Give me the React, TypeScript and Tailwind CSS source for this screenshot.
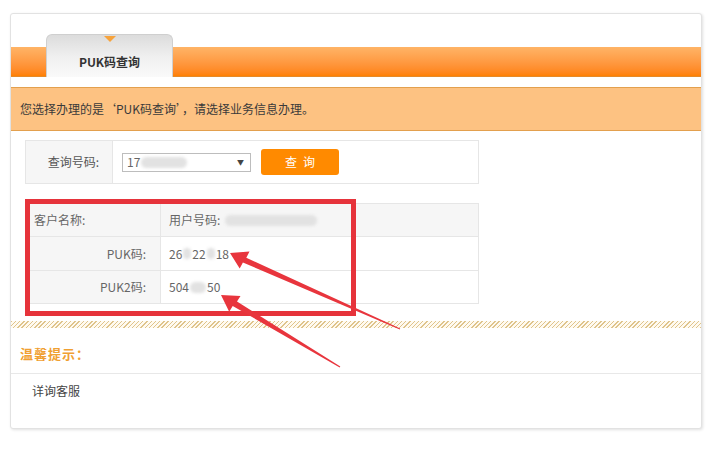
const font = { fontFamily: '"Noto Sans CJK SC", "Liberation Sans", sans-serif' }

function Blob({ w }: { w: number }) {
  // 打码的数字
  return <span className="inline-block h-[11px] rounded-full bg-[#e2e2e2] blur-[1.5px] align-middle mx-[1px]" style={{ width: w }} />
}

export default function App() {
  return (
    <div className="relative w-[720px] h-[462px] bg-white pt-[13px] pl-[10px] text-[#333]" style={font}>
      <div className="relative w-[692px] h-[416px] border border-[#e2e2e2] rounded-[3px] shadow-[1px_1px_3px_rgba(0,0,0,0.12)] bg-white">

        {/* ── Onglets ─────────────────────────────────────────── */}
        <div className="flex pt-[20px]">
          <div className="w-[35px] h-[30px] self-end bg-gradient-to-b from-[#ffb466] to-[#ff8000] border-b border-[#e58a2a]" />
          <div className="relative w-[127px] h-[43px] rounded-t-[6px] border border-b-0 border-[#cfcfcf] bg-gradient-to-b from-[#dcdcdc] via-[#efefef] to-[#fafafa] flex items-center justify-center pt-[12px]">
            <span className="absolute top-[1px] left-1/2 -translate-x-1/2 w-0 h-0 border-l-[6px] border-r-[6px] border-t-[6px] border-l-transparent border-r-transparent border-t-[#f7a33c]" />
            <span className="text-[12px] font-bold text-[#333]">PUK码查询</span>
          </div>
          <div className="flex-1 h-[30px] self-end bg-gradient-to-b from-[#ffb466] to-[#ff8000] border-b border-[#e58a2a]" />
        </div>

        {/* ── Bandeau ─────────────────────────────────────────── */}
        <div className="mt-[10px] h-[44px] bg-[#fdc282] border-y border-[#e3a04e] flex items-center pl-[9px] text-[12px] text-[#3a3a3a]">
          您选择办理的是‘PUK码查询’，请选择业务信息办理。
        </div>

        {/* ── Recherche ───────────────────────────────────────── */}
        <div className="ml-[14px] mt-[9px] w-[454px] h-[44px] border border-[#e6e6e6] flex">
          <div className="w-[87px] bg-[#f6f6f6] border-r border-[#e6e6e6] flex items-center justify-end pr-[13px] text-[12px] text-[#555]">查询号码:</div>
          <div className="flex items-center pl-[9px]">
            <div className="w-[129px] h-[19px] border border-[#bdbdbd] bg-white flex items-center pl-[4px] pr-[6px] text-[12px] text-[#666]">
              <span>17</span>
              <Blob w={46} />
              <span className="ml-auto text-[7px] text-[#444]">▼</span>
            </div>
            <button className="ml-[10px] w-[78px] h-[26px] rounded-[3px] bg-[#ff8a00] text-white text-[12px] tracking-[6px] pl-[6px]">查询</button>
          </div>
        </div>

        {/* ── Résultat ────────────────────────────────────────── */}
        <div className="ml-[14px] mt-[19px] w-[454px] border border-[#e6e6e6] text-[12px] text-[#666]">
          <div className="flex h-[33px] bg-[#f6f6f6] border-b border-[#e6e6e6]">
            <div className="w-[135px] border-r border-[#e6e6e6] flex items-center pl-[8px]">客户名称:</div>
            <div className="flex items-center pl-[8px]">用户号码:<span className="w-[4px]" /><Blob w={92} /></div>
          </div>
          <div className="flex h-[34px] border-b border-[#e6e6e6]">
            <div className="w-[135px] bg-[#f6f6f6] border-r border-[#e6e6e6] flex items-center justify-end pr-[14px]">PUK码:</div>
            <div className="flex items-center pl-[8px]">26<Blob w={8} />22<Blob w={8} />18</div>
          </div>
          <div className="flex h-[32px]">
            <div className="w-[135px] bg-[#f6f6f6] border-r border-[#e6e6e6] flex items-center justify-end pr-[14px]">PUK2码:</div>
            <div className="flex items-center pl-[8px]">504<Blob w={16} />50</div>
          </div>
        </div>

        {/* ── Séparateur hachuré ─────────────────────────────── */}
        <div className="mt-[17px] h-[7px] bg-[repeating-linear-gradient(135deg,#dfc48c_0px,#dfc48c_1px,#fffaf0_1px,#fffaf0_3px)]" />

        {/* ── Tips ────────────────────────────────────────────── */}
        <div className="h-[46px] border-b border-[#e8e8e8] flex items-center pl-[9px] pt-[6px] text-[13px] font-bold text-[#f0a032] tracking-[1px]">温馨提示：</div>
        <div className="pl-[21px] pt-[8px] text-[12px] text-[#444]">详询客服</div>

        {/* cadre rouge annoté */}
        <div className="absolute left-[14px] top-[185px] w-[331px] h-[117px] border-[5px] border-[#e6333b] pointer-events-none" />
      </div>

      {/* flèches annotées */}
      <svg className="absolute left-0 top-0 pointer-events-none" width="720" height="462" viewBox="0 0 720 462">
        <polygon fill="#e8353d" points="230,253 249.5,251.5 246.3,257.8 400.2,328.5 399.8,329.5 242.9,262.4 239.7,268.5" />
        <polygon fill="#e8353d" points="221,295 240.5,296 237,301.6 340.3,366.6 339.7,367.4 232.7,306 229.2,311.7" />
      </svg>
    </div>
  )
}
